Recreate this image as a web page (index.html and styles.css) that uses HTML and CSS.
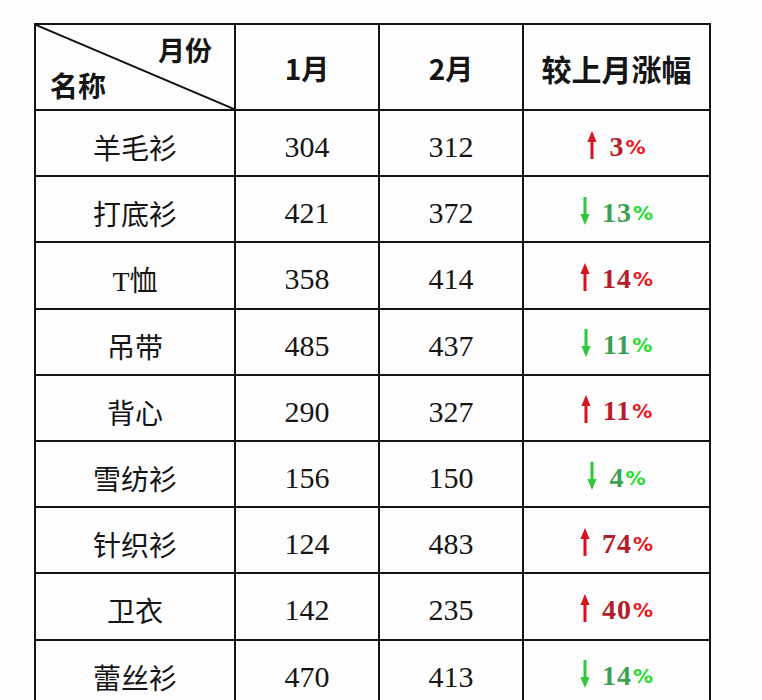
FILE: index.html
```html
<!DOCTYPE html>
<html lang="zh-CN">
<head>
<meta charset="utf-8">
<title>服装月度对比</title>
<link rel="stylesheet" href="styles.css">
</head>
<body>
<div class="sheet">
  <div class="cell head corner">
    <svg class="diag" viewBox="0 0 100 100" preserveAspectRatio="none"><line x1="0" y1="0" x2="100" y2="100" stroke="#111" stroke-width="2" vector-effect="non-scaling-stroke"/></svg>
    <span class="corner-top">月份</span>
    <span class="corner-bottom">名称</span>
  </div>
  <div class="cell head">1月</div>
  <div class="cell head">2月</div>
  <div class="cell head wide">较上月涨幅</div>

  <div class="cell name">羊毛衫</div><div class="cell num">304</div><div class="cell num">312</div>
  <div class="cell pct up"><svg class="arrow" viewBox="0 0 10 28"><path d="M5 0 L9.6 11 L6.5 11 L6.5 28 L3.5 28 L3.5 11 L0.4 11 Z"/></svg><span class="val">3</span><span class="pc">%</span></div>

  <div class="cell name">打底衫</div><div class="cell num">421</div><div class="cell num">372</div>
  <div class="cell pct down"><svg class="arrow" viewBox="0 0 10 28"><path d="M5 28 L9.6 17 L6.5 17 L6.5 0 L3.5 0 L3.5 17 L0.4 17 Z"/></svg><span class="val">13</span><span class="pc">%</span></div>

  <div class="cell name">T恤</div><div class="cell num">358</div><div class="cell num">414</div>
  <div class="cell pct up"><svg class="arrow" viewBox="0 0 10 28"><path d="M5 0 L9.6 11 L6.5 11 L6.5 28 L3.5 28 L3.5 11 L0.4 11 Z"/></svg><span class="val">14</span><span class="pc">%</span></div>

  <div class="cell name">吊带</div><div class="cell num">485</div><div class="cell num">437</div>
  <div class="cell pct down"><svg class="arrow" viewBox="0 0 10 28"><path d="M5 28 L9.6 17 L6.5 17 L6.5 0 L3.5 0 L3.5 17 L0.4 17 Z"/></svg><span class="val">11</span><span class="pc">%</span></div>

  <div class="cell name">背心</div><div class="cell num">290</div><div class="cell num">327</div>
  <div class="cell pct up"><svg class="arrow" viewBox="0 0 10 28"><path d="M5 0 L9.6 11 L6.5 11 L6.5 28 L3.5 28 L3.5 11 L0.4 11 Z"/></svg><span class="val">11</span><span class="pc">%</span></div>

  <div class="cell name">雪纺衫</div><div class="cell num">156</div><div class="cell num">150</div>
  <div class="cell pct down"><svg class="arrow" viewBox="0 0 10 28"><path d="M5 28 L9.6 17 L6.5 17 L6.5 0 L3.5 0 L3.5 17 L0.4 17 Z"/></svg><span class="val">4</span><span class="pc">%</span></div>

  <div class="cell name">针织衫</div><div class="cell num">124</div><div class="cell num">483</div>
  <div class="cell pct up"><svg class="arrow" viewBox="0 0 10 28"><path d="M5 0 L9.6 11 L6.5 11 L6.5 28 L3.5 28 L3.5 11 L0.4 11 Z"/></svg><span class="val">74</span><span class="pc">%</span></div>

  <div class="cell name">卫衣</div><div class="cell num">142</div><div class="cell num">235</div>
  <div class="cell pct up"><svg class="arrow" viewBox="0 0 10 28"><path d="M5 0 L9.6 11 L6.5 11 L6.5 28 L3.5 28 L3.5 11 L0.4 11 Z"/></svg><span class="val">40</span><span class="pc">%</span></div>

  <div class="cell name">蕾丝衫</div><div class="cell num">470</div><div class="cell num">413</div>
  <div class="cell pct down"><svg class="arrow" viewBox="0 0 10 28"><path d="M5 28 L9.6 17 L6.5 17 L6.5 0 L3.5 0 L3.5 17 L0.4 17 Z"/></svg><span class="val">14</span><span class="pc">%</span></div>
</div>
</body>
</html>
```

FILE: styles.css
```css
html, body {
  margin: 0;
  padding: 0;
  overflow: hidden;
  background: #fdfdfe;
}

.sheet {
  display: grid;
  grid-template-columns: 198px 142px 142px 185px;
  grid-template-rows: 84px repeat(9, 64.2px);
  gap: 2px;
  padding: 2px;
  background: #141414;
  width: max-content;
  margin: 23px 0 0 34px;
}

.cell {
  background: #fdfdfe;
  display: flex;
  align-items: center;
  justify-content: center;
  color: #151515;
  font-family: "Liberation Serif", "Noto Sans CJK SC", serif;
}

.head {
  font-family: "Noto Sans CJK SC", "Liberation Sans", sans-serif;
  font-weight: 700;
  font-size: 28px;
  padding-top: 2px;
}

.head.wide {
  font-size: 30px;
}

.corner {
  position: relative;
  display: block;
}

.diag {
  position: absolute;
  left: 0;
  top: 0;
  width: 100%;
  height: 100%;
}

.corner-top {
  position: absolute;
  right: 22px;
  top: 11px;
  font-size: 27px;
  line-height: 1;
}

.corner-bottom {
  position: absolute;
  left: 14px;
  top: 46px;
  font-size: 28px;
  line-height: 1;
}

.name {
  font-size: 28px;
  padding-top: 8px;
}

.num {
  font-size: 30px;
  padding-top: 8px;
}

.pct {
  font-size: 27px;
  padding-top: 7px;
}

.arrow {
  width: 10px;
  height: 28px;
  margin-right: 12px;
  margin-top: -4px;
  flex: none;
}

.val {
  font-family: "Liberation Serif", serif;
  font-size: 28px;
  font-weight: 700;
  letter-spacing: 1px;
}

.pc {
  font-weight: 700;
  font-family: "DejaVu Sans", sans-serif;
  font-size: 20px;
  margin-left: 1px;
}

.up { color: #b51d2a; }
.up .arrow { fill: #d4141e; }
.up .pc { color: #ee1520; }

.down { color: #3f9f55; }
.down .arrow { fill: #2fc83c; }
.down .pc { color: #1fe02a; }
```
